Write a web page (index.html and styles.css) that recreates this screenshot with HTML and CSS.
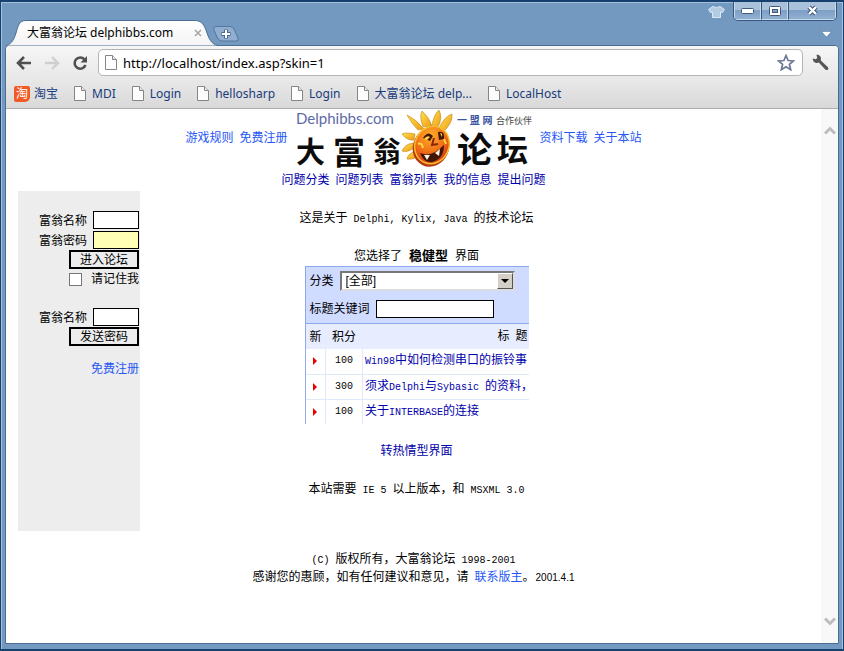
FILE: index.html
```html
<!DOCTYPE html>
<html lang="zh-CN">
<head>
<meta charset="utf-8">
<title>大富翁论坛 delphibbs.com</title>
<link rel="stylesheet" href="styles.css">
</head>
<body>
<svg class="defs" aria-hidden="true">
  <defs>
    <linearGradient id="tabfill" x1="0" y1="0" x2="0" y2="1"><stop offset="0" stop-color="#fff"/><stop offset="1" stop-color="#f4f4f4"/></linearGradient>
    <radialGradient id="sunfill" cx=".35" cy=".3" r=".8"><stop offset="0" stop-color="#ffb02a"/><stop offset=".5" stop-color="#f27418"/><stop offset="1" stop-color="#cf2d12"/></radialGradient>
    <linearGradient id="rayfill" x1="0" y1="0" x2="1" y2="1"><stop offset="0" stop-color="#ffe34a"/><stop offset="1" stop-color="#ef9a14"/></linearGradient>
    <symbol id="page" viewBox="0 0 12 15"><path d="M.5.5h7l4 4v10H.5z" fill="#fdfdfd" stroke="#858585"/><path d="M7.5.5v4h4" fill="#e8e8e8" stroke="#858585"/></symbol>
  </defs>
</svg>
<div class="window">
  <header class="titlebar">
    <div class="tabs">
      <div class="tab">
        <svg class="tab-shape" viewBox="0 0 212 26"><path d="M0 25.500C6 24 8 19 10 13C12 6 13 .5 20 .5H188C195 .5 197 3 200 10C203 19 205 24 212 25.500" fill="url(#tabfill)" stroke="#4c6d93"/></svg>
        <span class="tab-title">大富翁论坛 delphibbs.com</span>
        <button class="plain tab-close" aria-label="关闭标签"><svg width="8" height="8" viewBox="0 0 8 8"><path d="M1 1l6 6M7 1L1 7" stroke="#a5a5a5" stroke-width="1.500"/></svg></button>
      </div>
      <button class="plain new-tab" aria-label="新标签"><svg width="26" height="16" viewBox="0 0 26 16"><path d="M3 .5H17Q20 .5 21.500 4L25 12Q26 15 23 15H9Q6 15 4.500 12L1 4Q0 .5 3 .5z" fill="#91aed0" stroke="#53769e"/><path d="M13 3.500v9M8.500 8h9" stroke="#49688d" stroke-width="4"/><path d="M13 4v8M9 8h8" stroke="#fff" stroke-width="2"/></svg></button>
    </div>
    <div class="window-side">
      <div class="window-buttons">
        <svg class="shirt" width="17" height="12" viewBox="0 0 17 12"><path d="M5 .5Q8.500 3 12 .5L16.500 3.500L14.500 6.500L12.500 6V11.500H4.500V6L2.500 6.500L.5 3.500z" fill="#b4cce3" stroke="#dce9f5"/></svg>
        <div class="caption-group">
          <button class="caption" aria-label="最小化"><svg width="13" height="6" viewBox="0 0 13 6"><rect x=".5" y=".5" width="12" height="5" rx="1" fill="#fff" stroke="#42597a"/></svg></button>
          <button class="caption" aria-label="最大化"><svg width="12" height="10" viewBox="0 0 12 10"><rect x=".5" y=".5" width="11" height="9" rx="1" fill="#fff" stroke="#42597a"/><rect x="3.500" y="3.500" width="5" height="3" fill="#7f9fc4" stroke="#42597a"/></svg></button>
          <button class="caption caption-close" aria-label="关闭"><svg width="13" height="11" viewBox="0 0 13 11"><path d="M3 2l7 7M10 2L3 9" stroke="#42597a" stroke-width="4.500"/><path d="M3 2l7 7M10 2L3 9" stroke="#fff" stroke-width="2.400"/></svg></button>
        </div>
      </div>
      <svg class="tab-menu" width="11" height="7" viewBox="0 0 11 7"><path d="M.5.5h10l-5 5.500z" fill="#fff" stroke="#4e7098" stroke-width=".5"/></svg>
    </div>
  </header>

  <div class="browser">
    <div class="toolbar">
      <button class="plain" aria-label="后退"><svg width="16" height="14" viewBox="0 0 16 14"><path d="M8 1L2 7l6 6M2.500 7H15" fill="none" stroke="#505050" stroke-width="2.600"/></svg></button>
      <button class="plain forward" aria-label="前进"><svg width="16" height="14" viewBox="0 0 16 14"><path d="M8 1l6 6-6 6M13.500 7H1" fill="none" stroke="#cfcfcf" stroke-width="2.400"/></svg></button>
      <button class="plain reload" aria-label="重新加载"><svg width="16" height="16" viewBox="0 0 16 16"><path d="M12.500 4.500A5.600 5.600 0 1 0 13.500 10" fill="none" stroke="#505050" stroke-width="2.600"/><path d="M15 1v6.500H8.500z" fill="#505050"/></svg></button>
      <div class="omnibox">
        <svg width="12" height="15"><use href="#page"/></svg>
        <input class="url" type="text" aria-label="地址" value="http://localhost/index.asp?skin=1">
        <button class="plain" aria-label="收藏"><svg width="18" height="17" viewBox="0 0 18 17"><path d="M9 1.500l2.100 5 5.400.4-4.100 3.500 1.300 5.300L9 12.800l-4.700 2.900 1.300-5.300L1.500 6.900l5.400-.4z" fill="#fff" stroke="#6c7894" stroke-width="1.700"/></svg></button>
      </div>
      <button class="plain wrench" aria-label="设置"><svg width="17" height="17" viewBox="0 0 17 17"><path d="M4.500.8L5.200 4 3.800 5.300.8 4.500C.6 8 4 9.800 6.800 8.600L13.500 15.700Q15 16.600 16 15.500T15.700 13L8.800 6.500C9.800 3 7.500.3 4.500.8z" fill="#555"/></svg></button>
    </div>
    <nav class="bookmarks">
      <a href="#"><span class="taobao">淘</span>淘宝</a>
      <a href="#"><svg width="12" height="15"><use href="#page"/></svg>MDI</a>
      <a href="#"><svg width="12" height="15"><use href="#page"/></svg>Login</a>
      <a href="#"><svg width="12" height="15"><use href="#page"/></svg>hellosharp</a>
      <a href="#"><svg width="12" height="15"><use href="#page"/></svg>Login</a>
      <a href="#"><svg width="12" height="15"><use href="#page"/></svg>大富翁论坛 delp...</a>
      <a href="#"><svg width="12" height="15"><use href="#page"/></svg>LocalHost</a>
    </nav>

    <div class="viewport">
      <div class="page">
        <header class="masthead">
          <nav class="side-links"><a href="#">游戏规则</a><a href="#">免费注册</a></nav>
          <svg class="logo" width="240" height="60" viewBox="0 0 240 60" role="img" aria-label="Delphibbs.com 大富翁论坛">
            <text class="logo-site" x="2" y="14">Delphibbs.com</text>
            <text class="logo-partner" x="163" y="14">一 盟 网</text>
            <text class="logo-coop" x="202" y="14">合作伙伴</text>
            <g class="logo-name"><text x="2" y="53" font-size="29">大</text><text x="39" y="54" font-size="32">富</text><text x="79" y="52" font-size="28">翁</text><text x="163" y="53" font-size="35">论</text><text x="203" y="51" font-size="31">坛</text></g>
            <g fill="url(#rayfill)" stroke="#c08422" stroke-width=".6">
              <path d="M124 20Q117 13 113 5Q122 9 130 19z"/><path d="M129 17Q125 6 128 1Q135 7 138 16z"/><path d="M138 15Q140 4 145 0Q149 8 144 17z"/><path d="M145 18Q151 6 158 4Q159 13 149 22z"/><path d="M121 24Q112 22 108 24Q113 31 120 30z"/><path d="M119 33Q111 34 108 41Q113 43 120 38z"/><path d="M119 42Q113 45 113 49Q118 50 123 47z"/>
            </g>
            <ellipse cx="137" cy="37" rx="18" ry="20" transform="rotate(25 137 37)" fill="#b3380f"/>
            <ellipse cx="138" cy="35" rx="17" ry="19" transform="rotate(25 138 35)" fill="url(#sunfill)" stroke="#f7bd2d" stroke-width="1.500"/>
            <path d="M129 28Q134 20 139 26L136 31zM144 22q7-2 6 7l-5 1z" fill="#461707"/>
            <path d="M130 29q3-4 6-2l-3 3zM146 23q3 0 2 4z" fill="#ffd43a"/>
            <path d="M140 28l-2 7 6-1" fill="none" stroke="#8c260c" stroke-width="2"/>
            <path d="M126 43Q138 48 150 35Q150 49 138 52Q130 53 126 43z" fill="#401407"/>
            <path d="M130 45l6 0-3 5zM141 43l5-4-1 7z" fill="#fff5df"/>
            <path d="M124 34q4-2 5 4M150 29l2 5" fill="none" stroke="#ffda3f" stroke-width="2"/>
          </svg>
          <nav class="side-links"><a href="#">资料下载</a><a href="#">关于本站</a></nav>
        </header>
        <nav class="main-nav"><a href="#">问题分类</a><a href="#">问题列表</a><a href="#">富翁列表</a><a href="#">我的信息</a><a href="#">提出问题</a></nav>

        <div class="columns">
          <aside class="sidebar">
            <form class="login">
              <div class="field"><label for="user">富翁名称</label><input class="box" id="user" type="text"></div>
              <div class="field"><label for="pass">富翁密码</label><input class="box filled" id="pass" type="password"></div>
              <button class="submit" type="button">进入论坛</button>
              <div class="remember"><input class="check" id="remember" type="checkbox"><label for="remember">请记住我</label></div>
            </form>
            <form class="login">
              <div class="field"><label for="user2">富翁名称</label><input class="box" id="user2" type="text"></div>
              <button class="submit" type="button">发送密码</button>
            </form>
            <a class="register" href="#">免费注册</a>
          </aside>

          <main class="main">
            <p>这是关于<span class="en"> Delphi, Kylix, Java </span>的技术论坛</p>
            <p class="chosen">您选择了<span class="en"> </span><b>稳健型</b><span class="en"> </span>界面</p>
            <section class="board">
              <form class="filter">
                <div class="filter-row"><label for="cat">分类</label>
                  <div class="select-wrap"><select id="cat"><option>[全部]</option></select><span class="drop"></span></div></div>
                <div class="filter-row"><label for="kw">标题关键词</label><input class="box keyword" id="kw" type="text"></div>
              </form>
              <table class="topics">
                <thead><tr><th class="c-new">新</th><th class="c-score">积分</th><th class="c-title">标<span class="en"> </span>题</th></tr></thead>
                <tbody>
                  <tr><td><i class="arrow"></i></td><td class="score en">100</td><td><a href="#"><span class="en">Win98</span>中如何检测串口的振铃事</a></td></tr>
                  <tr><td><i class="arrow"></i></td><td class="score en">300</td><td><a href="#">须求<span class="en">Delphi</span>与<span class="en">Sybasic </span>的资料，</a></td></tr>
                  <tr><td><i class="arrow"></i></td><td class="score en">100</td><td><a href="#">关于<span class="en">INTERBASE</span>的连接</a></td></tr>
                </tbody>
              </table>
            </section>
            <p class="switch"><a href="#">转热情型界面</a></p>
            <p>本站需要<span class="en"> IE 5 </span>以上版本，和<span class="en"> MSXML 3.0</span></p>
          </main>
        </div>

        <footer class="footer">
          <p><span class="en">(C) </span>版权所有，大富翁论坛<span class="en"> 1998-2001</span></p>
          <p>感谢您的惠顾，如有任何建议和意见，请<span class="en"> </span><a href="#">联系版主</a>。<span class="date">2001.4.1</span></p>
        </footer>
      </div>
      <div class="scrollbar">
        <svg width="12" height="9" viewBox="0 0 12 9"><path d="M1 7.500l5-5 5 5" fill="none" stroke="#bdbdbd" stroke-width="3"/></svg>
        <svg width="12" height="9" viewBox="0 0 12 9"><path d="M1 1.500l5 5 5-5" fill="none" stroke="#bdbdbd" stroke-width="3"/></svg>
      </div>
    </div>
  </div>
</div>
</body>
</html>
```
FILE: styles.css
```css
* { box-sizing: border-box; }
body { margin: 0; font: 12px/16px "Liberation Sans", "Noto Sans CJK SC", sans-serif; color: #000; }
p { margin: 0; }
a { color: #00a; text-decoration: none; }
svg { display: block; flex: none; }
.defs { position: absolute; width: 0; height: 0; }

/* Window frame */
.window { display: flex; flex-direction: column; min-height: 100vh; padding: 0 4px 5px; background: #7399c1; border: 1px solid #17406f; border-top-width: 2px; border-bottom-width: 2px; box-shadow: inset 1px 1px #a5c0dc, inset -1px 0 #a5c0dc; }
.titlebar { display: flex; justify-content: space-between; height: 43px; }
.tabs { display: flex; align-items: flex-end; }
.tab { position: relative; display: flex; align-items: center; width: 212px; height: 26px; margin-left: 1px; padding: 0 16px 0 21px; justify-content: space-between; z-index: 1; margin-bottom: -1px; }
.tab-shape { position: absolute; inset: 0; width: 100%; height: 100%; }
.tab-title { position: relative; font: 12px/18px "Noto Sans", "Noto Sans CJK SC", sans-serif; white-space: nowrap; }
.tab-close { position: relative; }
.new-tab { margin: 0 0 3px -5px; }
.plain { display: block; flex: none; padding: 0; border: 0; background: none; }
.window-side { display: flex; flex-direction: column; align-items: flex-end; gap: 10px; }
.window-buttons { display: flex; gap: 8px; align-items: center; }
.tab-menu { margin-right: 7px; }
.caption-group { display: flex; margin-right: 2px; border: 1px solid #35597f; border-top: 0; border-radius: 0 0 5px 5px; overflow: hidden; }
.caption { display: flex; align-items: center; justify-content: center; width: 27px; height: 18px; padding: 0; border: 1px solid #c8d9ea; border-top: 0; background: linear-gradient(#a9c1db 0 45%, #7f9fc4 50%, #8fb0d3); }
.caption + .caption { border-left-color: #35597f; }
.caption-close { width: 48px; }

/* Browser chrome */
.browser { display: flex; flex: 1; flex-direction: column; border: 1px solid #4c6d93; border-radius: 4px 4px 0 0; background: #fff; }
.toolbar { display: flex; align-items: center; height: 33px; padding: 0 9px 0 10px; background: linear-gradient(#f6f6f6, #e8e8e8); border-radius: 4px 4px 0 0; }
.forward { margin-left: 12px; }
.reload { margin-left: 12px; }
.omnibox { display: flex; flex: 1; align-items: center; gap: 6px; height: 27px; margin: 0 9px 0 10px; padding: 0 7px 0 6px; background: #fff; border: 1px solid #b5b5b5; border-radius: 5px; }
.url { flex: 1; min-width: 0; padding: 0; border: 0; outline: 0; font: 13px/20px "Noto Sans", sans-serif; background: none; }
.bookmarks { display: flex; align-items: center; gap: 16px; height: 30px; padding: 0 8px; background: linear-gradient(#e8e8e8, #d9d9d9); border-bottom: 1px solid #aaadb0; }
.bookmarks a { display: flex; align-items: center; gap: 6px; font: 12px/18px "Noto Sans", "Noto Sans CJK SC", sans-serif; color: #173b7c; white-space: nowrap; }
.bookmarks a:first-child { gap: 4px; }
.taobao { width: 16px; height: 16px; border-radius: 2px 2px 5px 2px; background: #f15a24; color: #fff; text-align: center; line-height: 16px; }
.viewport { display: flex; flex: 1; }
.page { flex: 1; }
.scrollbar { display: flex; flex-direction: column; align-items: center; justify-content: space-between; width: 17px; padding: 17px 0; background: #f8f8f8; }

/* Forum header */
.masthead { display: flex; justify-content: center; align-items: center; gap: 6px; padding-top: 1px; }
.side-links, .main-nav { display: flex; gap: 6px; }
.side-links { padding-bottom: 4px; }
.side-links a, .register, .footer a { color: #2657f5; }
.main-nav { justify-content: center; padding-top: 2px; }
.logo text { font-family: "Liberation Sans", "Noto Sans CJK SC", sans-serif; }
.logo .logo-site { font-family: Lato, sans-serif; font-size: 15px; fill: #5c6ba6; }
.logo .logo-partner { font-size: 10px; font-weight: bold; fill: #3b559f; }
.logo .logo-coop { font-size: 9px; fill: #444; }
.logo-name { fill: #0c0c0c; font-weight: bold; }

/* Columns */
.columns { display: grid; grid-template-columns: 122px 1fr 116px; padding: 3px 12px 0; }
.sidebar { min-height: 340px; padding: 20px 1px 0; background: #ededed; text-align: right; }
.login { display: flex; flex-direction: column; align-items: flex-end; }
.login + .login { margin-top: 19px; }
.register { display: block; margin-top: 15px; }
.field { display: flex; align-items: flex-start; gap: 6px; height: 20px; line-height: 20px; }
.field + .submit { margin-top: -1px; }
.box { width: 46px; height: 18px; padding: 0 2px; border: 1px solid #000; border-radius: 0; outline: 0; background: #fff; font: inherit; }
.filled { background: #ffffb5; }
.submit { width: 70px; height: 19px; padding: 0 0 4px; border: 2px solid #000; background: #ededed; font: 12px/14px "Noto Sans CJK SC", sans-serif; }
.remember { display: flex; justify-content: space-between; align-items: center; width: 70px; height: 20px; }
.check { appearance: none; width: 13px; height: 13px; margin: 0; border: 1px solid #777; background: #fff; }
.check:checked { background: #4676c4; }
.main { display: flex; flex-direction: column; align-items: center; padding-top: 19px; }
.en { font: 10px/16px "Liberation Mono", monospace; white-space: pre; }
.chosen { margin-top: 20px; }
.chosen b { margin: 0 1px; font-size: 13px; }
.switch { margin: 19px 0 22px; }

/* Topic board */
.board { width: 224px; height: 158px; overflow: hidden; border: 1px solid #8ea8ea; border-width: 1px 0 0 1px; }
.filter { padding: 4px; background: #cfdbff; border-bottom: 1px solid #8ea8ea; }
.filter-row { display: flex; align-items: center; gap: 6px; height: 20px; }
.filter-row + .filter-row { margin-top: 8px; }
.select-wrap { position: relative; width: 175px; height: 20px; }
select { appearance: none; width: 100%; height: 100%; padding: 0 4px; border: 2px solid; border-color: #777 #ddd #ddd #777; border-radius: 0; background: #fff; font: 12px/16px "Liberation Sans", "Noto Sans CJK SC", sans-serif; color: #000; }
.drop { position: absolute; top: 2px; right: 2px; width: 16px; height: 16px; background: #d4d0c8; border: 1px solid; border-color: #fff #555 #555 #fff; pointer-events: none; }
.drop::after { content: ""; position: absolute; top: 5px; left: 3px; border: 4px solid transparent; border-top-color: #000; border-bottom: 0; }
.keyword { width: 118px; }
.topics { width: 100%; table-layout: fixed; border-collapse: collapse; }
.topics th { height: 25px; padding: 0; background: #e7edff; font-weight: normal; }
.topics .c-new { width: 20px; }
.topics .c-score { width: 37px; }
.topics .c-title { text-align: right; padding-right: 1px; }
.topics td { height: 25px; padding: 0 0 0 2px; border: 1px solid #e1e8fc; border-width: 0 0 1px 1px; white-space: nowrap; }
.topics td:first-child { border-left: 0; padding: 0; }
.topics .score { padding: 0; text-align: center; }
.arrow { display: block; width: 0; margin: 0 auto; border: 4px solid transparent; border-left-color: #e80000; border-right: 0; }

/* Footer */
.footer { padding: 20px 0 32px; text-align: center; }
.date { font: 10px/16px "Liberation Sans", sans-serif; margin-left: 1px; }
```
